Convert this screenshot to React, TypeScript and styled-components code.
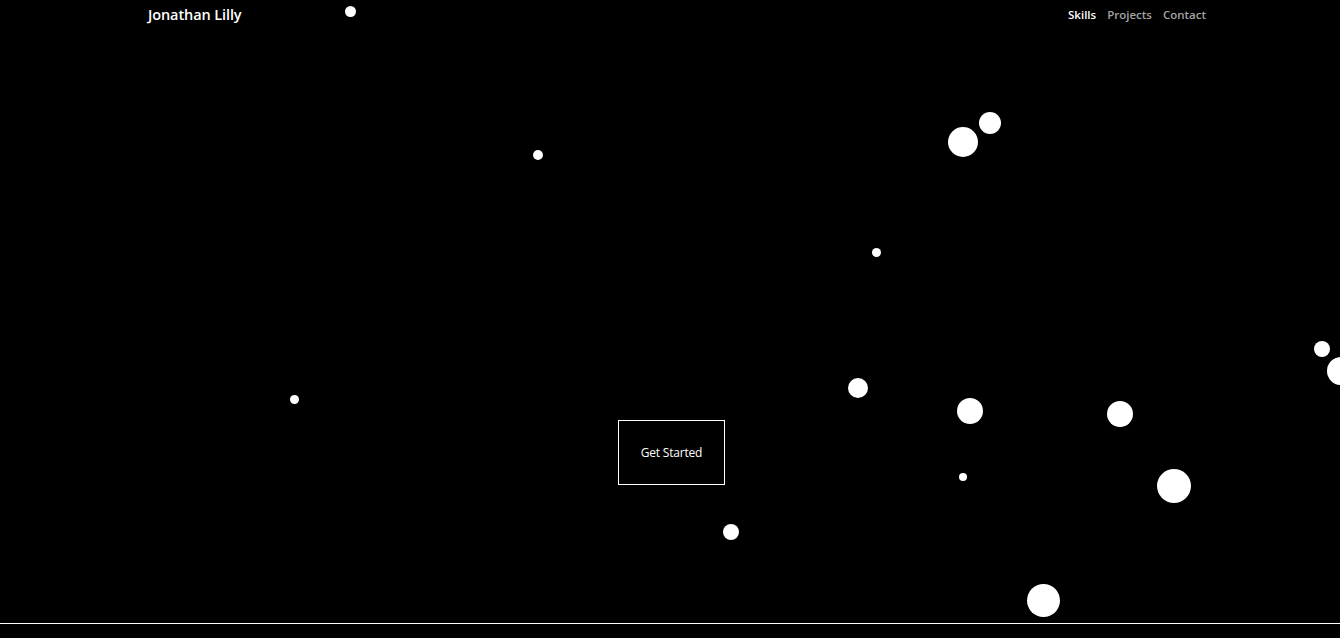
import React from "react";
import styled, { createGlobalStyle } from "styled-components";

const GlobalStyle = createGlobalStyle`
  html, body {
    margin: 0;
    padding: 0;
    background: #000;
  }
  body {
    font-family: "Open Sans", "Noto Sans", sans-serif;
    color: #fff;
  }
`;

const Hero = styled.section`
  position: relative;
  height: 624px;
  border-bottom: 1px solid #fff;
  box-sizing: border-box;
  overflow: hidden;
  display: flex;
  flex-direction: column;
`;

const Particles = styled.div`
  position: absolute;
  inset: 0;
  pointer-events: none;
`;

const Dot = styled.span<{ $x: number; $y: number; $r: number }>`
  position: absolute;
  left: ${(p) => p.$x - p.$r}px;
  top: ${(p) => p.$y - p.$r}px;
  width: ${(p) => p.$r * 2}px;
  height: ${(p) => p.$r * 2}px;
  border-radius: 50%;
  background: #fff;
`;

const Navbar = styled.nav`
  position: relative;
  display: flex;
  align-items: center;
  justify-content: space-between;
  height: 28px;
  padding: 0 134px 0 148px;
`;

const Brand = styled.a`
  font-size: 14.5px;
  font-weight: 600;
  color: #fff;
  text-decoration: none;
  letter-spacing: -0.1px;
`;

const NavLinks = styled.ul`
  display: flex;
  gap: 11px;
  margin: 0 0 3px;
  padding: 0;
  list-style: none;
`;

const NavLink = styled.a<{ $active?: boolean }>`
  font-size: 11.5px;
  font-weight: 600;
  color: ${(p) => (p.$active ? "#fff" : "#a4a4a4")};
  text-decoration: none;
`;

const Main = styled.div`
  position: relative;
  flex: 1;
  display: flex;
  justify-content: center;
  padding-top: 392px;
  padding-left: 3px;
`;

const StartButton = styled.button`
  width: 107px;
  height: 65px;
  background: transparent;
  border: 1px solid #fff;
  color: #fff;
  font-family: "Open Sans", "Noto Sans", sans-serif;
  font-size: 12px;
  letter-spacing: -0.2px;
  cursor: pointer;
`;

const dots = [
  { x: 350, y: 11, r: 5.5 },
  { x: 538, y: 154.5, r: 5 },
  { x: 990, y: 123, r: 11 },
  { x: 963, y: 142, r: 15 },
  { x: 876, y: 252.5, r: 4.5 },
  { x: 1322, y: 348.5, r: 8 },
  { x: 1341, y: 371, r: 14 },
  { x: 857.5, y: 387.5, r: 10 },
  { x: 969.5, y: 411, r: 13 },
  { x: 1119.5, y: 413.5, r: 13 },
  { x: 294, y: 399.5, r: 4.5 },
  { x: 963, y: 476.5, r: 4 },
  { x: 1174, y: 486, r: 17 },
  { x: 731, y: 531.5, r: 8 },
  { x: 1043.5, y: 600.5, r: 16.5 },
];

export default function App() {
  return (
    <>
      <GlobalStyle />
      <Hero>
        <Particles>
          {dots.map((d, i) => (
            <Dot key={i} $x={d.x} $y={d.y} $r={d.r} />
          ))}
        </Particles>
        <Navbar>
          <Brand href="#">Jonathan Lilly</Brand>
          <NavLinks>
            <li>
              <NavLink href="#" $active>
                Skills
              </NavLink>
            </li>
            <li>
              <NavLink href="#">Projects</NavLink>
            </li>
            <li>
              <NavLink href="#">Contact</NavLink>
            </li>
          </NavLinks>
        </Navbar>
        <Main>
          <div>
            <StartButton>Get Started</StartButton>
          </div>
        </Main>
      </Hero>
    </>
  );
}
